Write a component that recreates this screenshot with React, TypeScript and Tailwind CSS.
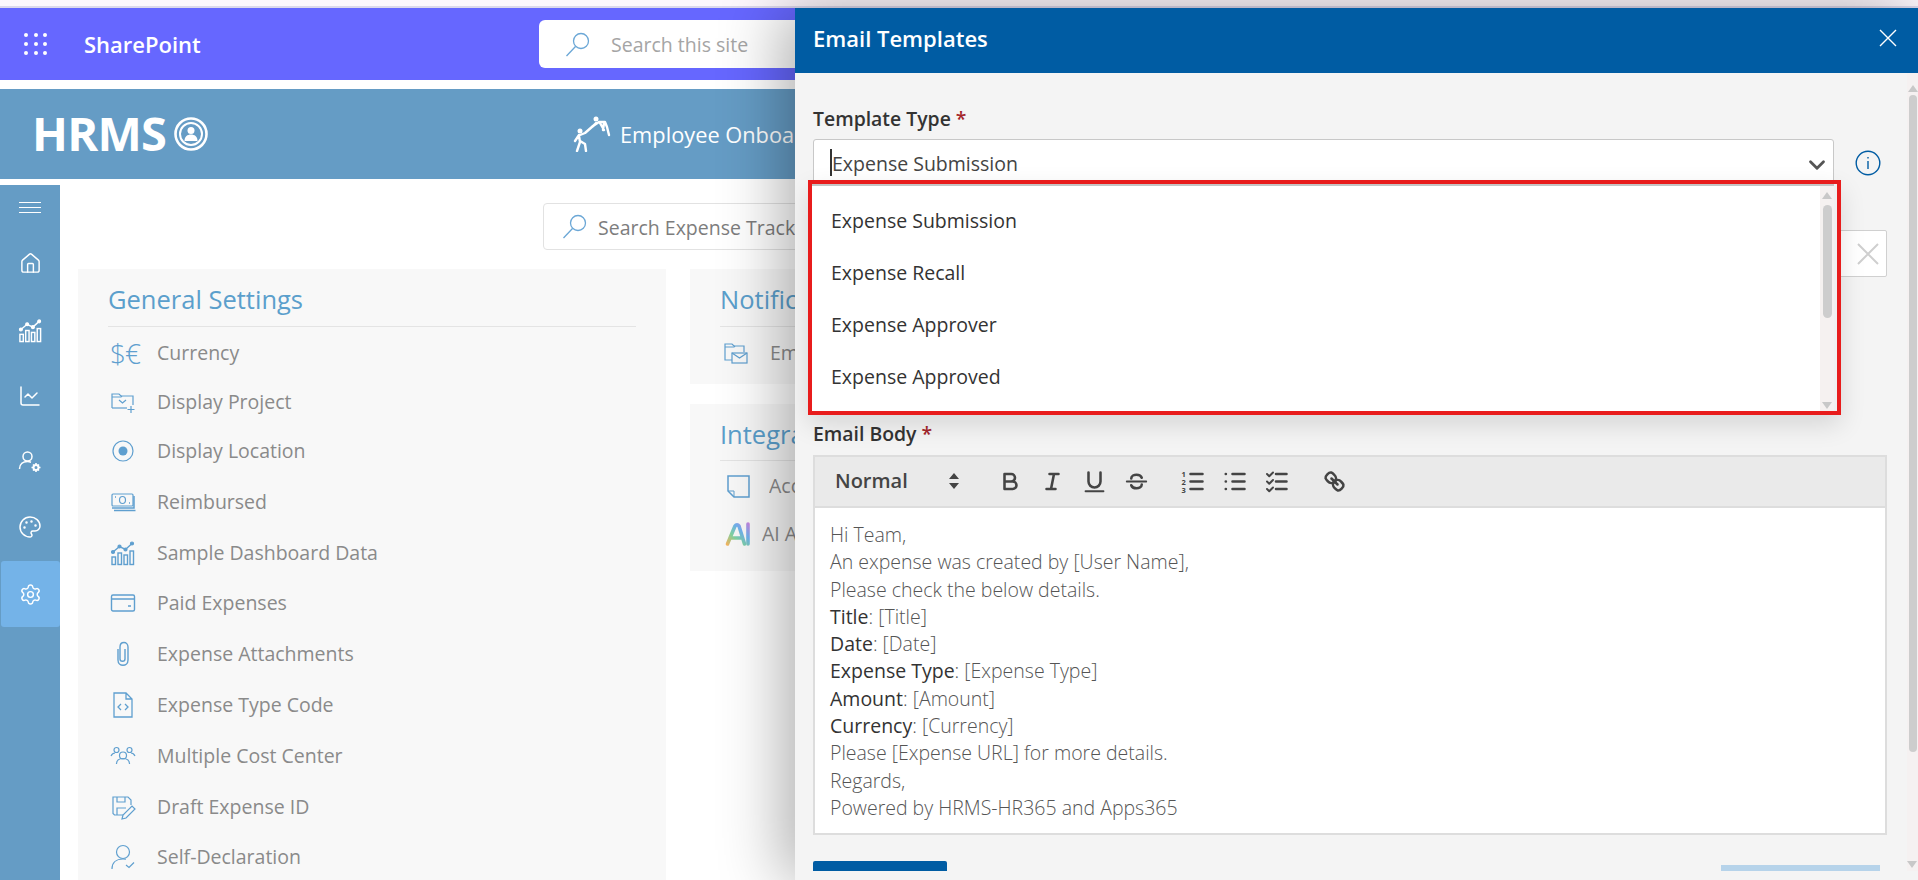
import React from "react";
import { ChevronDown, House, ChartLine, Palette, Settings } from "lucide-react";

const Svg = ({ size = 26, children, className = "" }: { size?: number; children: React.ReactNode; className?: string }) => (
  <svg width={size} height={size} viewBox="0 0 26 26" fill="none" stroke="currentColor" strokeWidth={1.2} className={className}>
    {children}
  </svg>
);

const Lens = ({ className = "" }: { className?: string }) => (
  <svg width="26" height="25" viewBox="0 0 26 25" fill="none" stroke="#6ba7d6" strokeWidth={1.3} className={className}>
    <circle cx="16" cy="9" r="7.5" />
    <path d="M10.5 14.5 1.5 24" />
  </svg>
);

const BarsIcon = ({ size = 26, sw = 1.4 }: { size?: number; sw?: number }) => (
  <Svg size={size}>
    <g strokeWidth={sw}>
      <rect x="2" y="17" width="3.500" height="7.500" />
      <rect x="8" y="13" width="3.500" height="11.500" />
      <rect x="14" y="15" width="3.500" height="9.500" />
      <rect x="20" y="11" width="3.500" height="13.500" />
      <path d="M3 12 9.500 6.500 15.500 9.500 22 3.500" />
    </g>
    <circle cx="3" cy="12" r="1.500" fill="currentColor" />
    <circle cx="9.500" cy="6.500" r="1.500" fill="currentColor" />
    <circle cx="15.500" cy="9.500" r="1.500" fill="currentColor" />
    <circle cx="22" cy="3.500" r="1.500" fill="currentColor" />
  </Svg>
);
const FolderIcon = () => (
  <Svg>
    <path d="M2 19V5h7l2 2h12v9" />
    <path d="M2 8h9l1-1" />
    <path d="M2 19h15" />
    <path d="m9 11 3.5 3 3.5-3" />
    <path d="M21 17v7M17.500 20.500h7" />
  </Svg>
);
const DotIcon = () => (
  <Svg>
    <circle cx="13" cy="13" r="10" />
    <circle cx="13" cy="13" r="4.500" fill="currentColor" stroke="none" />
  </Svg>
);
const MoneyIcon = () => (
  <Svg>
    <rect x="2" y="5" width="21" height="12" rx="1" />
    <ellipse cx="12.500" cy="11" rx="3" ry="3.500" />
    <path d="M5 8h1M19 14h1M2 19h22V7M4 21.500h21.500" strokeWidth={1.5} />
  </Svg>
);
const CardIcon = () => (
  <Svg>
    <rect x="1.500" y="5" width="23" height="16" rx="1.500" strokeWidth={1.4} />
    <path d="M1.500 9h23M18 16h3" strokeWidth={1.4} />
  </Svg>
);
const ClipIcon = () => (
  <Svg>
    <path d="M8 8v11c0 7 10 7 10 0V6c0-6-8-6-8 0v12c0 3 5 3 5 0V8" strokeWidth={1.4} />
  </Svg>
);
const FileIcon = () => (
  <Svg>
    <path d="M4 1h12l6 6v18H4zM16 1v6h6" strokeWidth={1.3} />
    <path d="m11 12-3 3 3 3M15 12l3 3-3 3" strokeWidth={1.3} />
  </Svg>
);
const PeopleIcon = () => (
  <Svg>
    <circle cx="6.500" cy="7" r="2.500" />
    <circle cx="19.500" cy="7" r="2.500" />
    <circle cx="13" cy="12.500" r="3.500" />
    <path d="M1 13c1-2 3-3 4-3M25 13c-1-2-3-3-4-3M6.500 21c0-4 3-5.500 6.500-5.500s6.500 1.500 6.500 5.500" />
  </Svg>
);
const DraftIcon = () => (
  <Svg>
    <path d="M13 21H4.500L3 19.500V3h15l3 3v5" />
    <path d="M7 3v5h8V3M7 21v-7h9" />
    <path d="m12 25 1-4 9-9 3 3-9 9z" />
  </Svg>
);
const SelfIcon = () => (
  <Svg>
    <circle cx="13" cy="8" r="6.500" />
    <path d="M2 25c0-6 4-10 11-10 1 0 2 0 3 .3" />
    <path d="m16 21 3 2.500 5-5" />
  </Svg>
);
const EmailIcon = () => (
  <Svg>
    <path d="M9 20H2V4h7l2 2h10v6" />
    <path d="M2 7h9l1-1" />
    <rect x="9" y="13" width="15" height="10" />
    <path d="m9 13 7.500 5 7.500-5" />
  </Svg>
);
const NoteIcon = () => (
  <Svg>
    <path d="M3 3h21v21H9l-6-6z" strokeWidth={1.5} />
    <path d="M3 18h6v6" strokeWidth={1} />
  </Svg>
);
const AiIcon = () => (
  <svg width="26" height="26" viewBox="0 0 26 26" fill="none" strokeWidth={3.6} strokeLinecap="round" strokeLinejoin="round">
    <defs>
      <linearGradient id="aiGrad" gradientUnits="userSpaceOnUse" x1="2" y1="24" x2="24" y2="2">
        <stop offset="0" stopColor="#f4b45f" />
        <stop offset="0.35" stopColor="#7fd3a0" />
        <stop offset="0.65" stopColor="#6fb2ef" />
        <stop offset="1" stopColor="#c884e0" />
      </linearGradient>
    </defs>
    <path d="M2.500 23 10 5c1-1.500 3-1.500 4 0l5.500 18M7 17h10" stroke="url(#aiGrad)" />
    <path d="M23 3v20" stroke="url(#aiGrad)" />
  </svg>
);
const UserGear = () => (
  <svg width="24" height="24" viewBox="0 0 24 24" fill="none" stroke="#fff" strokeWidth={1.5}>
    <circle cx="9.500" cy="6.500" r="4.500" />
    <path d="M1.500 19c0-5 3.500-7.500 8-7.500 1.500 0 2.500.3 3.500.7" />
    <circle cx="18" cy="17.500" r="2.500" strokeWidth={2} />
    <path d="M18 13v1.500M18 20.500V22M13.500 17.500H15M21 17.500h1.500M15 14.500l1 1M20 19.500l1 1M15 20.500l1-1M20 15.500l1-1" strokeWidth={1.6} />
  </svg>
);
const Hands = () => (
  <svg width="40" height="36" viewBox="0 0 40 36" fill="#fff" stroke="#fff" strokeLinecap="round" strokeLinejoin="round">
    <circle cx="8" cy="15" r="2.500" stroke="none" />
    <path d="M7 19 3 25M8 19l5-2 8-7M7 20l1 6-3 9M8 25l5 3 1 7" strokeWidth={2.4} fill="none" />
    <circle cx="24" cy="3" r="2.500" stroke="none" />
    <path d="m21 10 6-4 6 0 2 5 2 8M28 7l4 7M32 7l-1 7M21 10l3-3" strokeWidth={2.4} fill="none" />
  </svg>
);
const Logo = () => (
  <svg width="36" height="36" viewBox="0 0 36 36" fill="none" stroke="#fff">
    <circle cx="18" cy="18" r="15.500" strokeWidth={2.6} />
    <circle cx="18" cy="18" r="11" strokeWidth={2} />
    <circle cx="18" cy="14.500" r="3.500" fill="#fff" stroke="none" />
    <path d="M11.500 25c0-4.500 3-6.500 6.500-6.500s6.500 2 6.500 6.500z" fill="#fff" stroke="none" />
  </svg>
);

const Q = ({ children }: { children: React.ReactNode }) => (
  <span className="flex w-[42px] justify-center">
    <svg width="27" height="27" viewBox="0 0 18 18" fill="none" stroke="#444" strokeWidth={1.7} strokeLinecap="round" strokeLinejoin="round">
      {children}
    </svg>
  </span>
);

const settings: { icon: React.ReactNode; label: string; h: string }[] = [
  { icon: <span className="text-[28px] leading-none font-light tracking-[-1px]">$€</span>, label: "Currency", h: "h-[49px]" },
  { icon: <FolderIcon />, label: "Display Project", h: "h-[49px]" },
  { icon: <DotIcon />, label: "Display Location", h: "h-[50px]" },
  { icon: <MoneyIcon />, label: "Reimbursed", h: "h-[51px]" },
  { icon: <BarsIcon />, label: "Sample Dashboard Data", h: "h-[51px]" },
  { icon: <CardIcon />, label: "Paid Expenses", h: "h-[50px]" },
  { icon: <ClipIcon />, label: "Expense Attachments", h: "h-[51px]" },
  { icon: <FileIcon />, label: "Expense Type Code", h: "h-[51px]" },
  { icon: <PeopleIcon />, label: "Multiple Cost Center", h: "h-[51px]" },
  { icon: <DraftIcon />, label: "Draft Expense ID", h: "h-[51px]" },
  { icon: <SelfIcon />, label: "Self-Declaration", h: "h-[50px]" },
];

const body: [string, string][] = [
  ["", "Hi Team,"],
  ["", "An expense was created by [User Name],"],
  ["", "Please check the below details."],
  ["Title", " [Title]"],
  ["Date", " [Date]"],
  ["Expense Type", " [Expense Type]"],
  ["Amount", " [Amount]"],
  ["Currency", " [Currency]"],
  ["", "Please [Expense URL] for more details."],
  ["", "Regards,"],
  ["", "Powered by HRMS-HR365 and Apps365"],
];

const Arrow = ({ down = false }: { down?: boolean }) => (
  <div className={`flex h-[8px] justify-center ${down ? "rotate-180" : ""}`}>
    <div className="h-0 w-0 border-x-[5px] border-b-[7px] border-x-transparent border-b-[#c8c8c8]" />
  </div>
);

export default function App() {
  return (
    <div className="relative flex h-[880px] flex-col overflow-hidden bg-white font-['Open_Sans',sans-serif]">
      <div className="h-[8px] border-b-2 border-[#dcd8ec] bg-[#fdf7fd]" />
      <div className="flex h-[72px] items-center bg-[#6667ff] text-white">
        <div className="ml-[24px] grid w-[24px] grid-cols-3 gap-x-[5px] gap-y-[5px]">
          {Array.from({ length: 9 }).map((_, i) => (
            <span key={i} className="h-[4px] w-[4px] rounded-full bg-white" />
          ))}
        </div>
        <span className="ml-[36px] w-[117px] text-[22px] font-semibold whitespace-nowrap">SharePoint</span>
        <div className="ml-[338px] flex h-[48px] w-[400px] items-center rounded-[6px] bg-white pl-[26px]">
          <Lens />
          <span className="mt-[2px] ml-[20px] text-[19.5px] text-[#a5a5a5]">Search this site</span>
        </div>
      </div>
      <div className="mt-[9px] flex h-[90px] items-center bg-[#659cc5] text-white">
        <span className="mb-[2px] ml-[32px] w-[135px] text-[47px] leading-none font-bold tracking-[-0.8px]">HRMS</span>
        <span className="ml-[6px]"><Logo /></span>
        <span className="ml-[363px]"><Hands /></span>
        <span className="mt-[2px] ml-[8px] text-[21.8px] whitespace-nowrap">Employee Onboarding</span>
      </div>
      <div className="mt-[6px] flex min-h-0 flex-1">
        <nav className="flex w-[60px] flex-col items-center bg-[#659cc5] text-white">
          <div className="mt-[17px] flex w-[22px] flex-col gap-[4px]">
            <span className="h-px bg-white" /><span className="h-px bg-white" /><span className="h-px bg-white" />
          </div>
          <span className="mt-[39px]"><House size={23} strokeWidth={1.5} /></span>
          <span className="mt-[43px]"><BarsIcon size={25} sw={1.5} /></span>
          <span className="mt-[41px]"><ChartLine size={24} strokeWidth={1.5} /></span>
          <span className="mt-[42px]"><UserGear /></span>
          <span className="mt-[41px]"><Palette size={24} strokeWidth={1.5} /></span>
          <span className="mt-[22px] flex h-[66px] w-[59px] items-center justify-center self-end rounded-[3px] bg-[#74b3e8]"><Settings size={23} strokeWidth={1.5} /></span>
        </nav>
        <main className="min-w-0 flex-1">
          <div className="mt-[18px] ml-[483px] flex h-[47px] w-[400px] items-center rounded-[4px] border border-[#e2e2e2] pl-[18px]">
            <Lens />
            <span className="mt-[2px] ml-[10px] text-[19.5px] text-[#7d7d7d] whitespace-nowrap">Search Expense Tracker</span>
          </div>
          <div className="mt-[19px] ml-[18px] flex gap-[24px]">
            <section className="h-[620px] w-[588px] shrink-0 bg-[#f8f8f8] px-[30px]">
              <h2 className="flex h-[58px] items-center border-b border-[#e4e4e4] pt-[4px] text-[25.5px] font-normal text-[#5b9fcc]">General Settings</h2>
              <div className="pt-px">
                {settings.map((s) => (
                  <div key={s.label} className={`flex items-center ${s.h}`}>
                    <span className="flex w-[49px] shrink-0 justify-start pl-[2px] text-[#5f9fcf]">{s.icon}</span>
                    <span className="text-[19.5px] text-[#8a8a8a]">{s.label}</span>
                  </div>
                ))}
              </div>
            </section>
            <div className="flex w-[105px] shrink-0 flex-col gap-[20px] overflow-hidden">
              <section className="h-[115px] bg-[#f8f8f8] pl-[30px]">
                <h2 className="flex h-[58px] items-center overflow-hidden border-b border-[#e4e4e4] pt-[4px] text-[25.5px] font-normal whitespace-nowrap text-[#5b9fcc]">Notifications</h2>
                <div className="flex h-[52px] items-center">
                  <span className="flex w-[50px] shrink-0 pl-[3px] text-[#5f9fcf]"><EmailIcon /></span>
                  <span className="min-w-0 overflow-hidden text-[19.5px] whitespace-nowrap text-[#8a8a8a]">Email Templates</span>
                </div>
              </section>
              <section className="h-[167px] bg-[#f8f8f8] pl-[30px]">
                <h2 className="flex h-[57px] items-center overflow-hidden border-b border-[#e4e4e4] pt-[4px] text-[25.5px] font-normal whitespace-nowrap text-[#5b9fcc]">Integrations</h2>
                <div className="flex h-[50px] items-center">
                  <span className="flex w-[49px] shrink-0 pl-[5px] text-[#5f9fcf]"><NoteIcon /></span>
                  <span className="min-w-0 overflow-hidden text-[19.5px] whitespace-nowrap text-[#8a8a8a]">Accounting</span>
                </div>
                <div className="flex h-[46px] items-center">
                  <span className="flex w-[42px] shrink-0 pl-[5px]"><AiIcon /></span>
                  <span className="min-w-0 overflow-hidden text-[19.5px] whitespace-nowrap text-[#8a8a8a]">AI Assistant</span>
                </div>
              </section>
            </div>
          </div>
        </main>
      </div>

      {/* Side panel */}
      <aside className="absolute top-[8px] right-0 bottom-0 flex w-[1123px] flex-col bg-[#f4f4f4] shadow-[-12px_0_60px_rgba(0,0,0,0.32)]">
        <header className="flex h-[65px] shrink-0 items-center justify-between bg-[#005ca3] pr-[21px] pb-[5px] pl-[18px] text-white">
          <span className="text-[22px] font-semibold">Email Templates</span>
          <svg width="18" height="18" viewBox="0 0 18 18" stroke="#fff" strokeWidth={1.4}><path d="m1 1 16 16M17 1 1 17" /></svg>
        </header>
        <div className="flex h-[798px] overflow-hidden">
          <div className="relative min-w-0 flex-1 pr-[20px] pl-[18px]">
            <div className="mt-[34px] h-[24px] text-[19.4px] leading-[24px] font-semibold text-[#333]">
              Template Type <span className="text-[#a4262c]">*</span>
            </div>
            <div className="mt-[8px] flex items-start">
              <div className="relative flex h-[47px] w-[1021px] items-center rounded-[3px] border border-[#c8c8c8] bg-white pt-[3px] pl-[16px]">
                <span className="-mt-[3px] h-[27px] w-[2px] bg-[#333]" />
                <span className="text-[19.5px] text-[#444]">Expense Submission</span>
                <ChevronDown className="absolute top-[12px] right-[3px] text-[#555]" size={26} strokeWidth={2.6} />
              </div>
              <svg width="26" height="26" viewBox="0 0 26 26" fill="none" className="mt-[11px] ml-[21px]" stroke="#005ca3" strokeWidth={1.4}>
                <circle cx="13" cy="13" r="11.800" />
                <path d="M13 11v8" />
                <path d="M13 7v1.600" />
              </svg>
            </div>
            <div className="mt-[44px] flex h-[47px] w-[1074px] items-center justify-end rounded-[2px] border border-[#d0d0d0] bg-white pr-[6px]">
              <svg width="24" height="24" viewBox="0 0 24 24" stroke="#cfcfcf" strokeWidth={2}><path d="m2 2 20 20M22 2 2 22" /></svg>
            </div>
            <div className="mt-[145px] h-[24px] text-[19.4px] leading-[24px] font-semibold text-[#333]">
              Email Body <span className="text-[#a4262c]">*</span>
            </div>
            <div className="mt-[9px] w-[1074px] border-2 border-[#dddddd]">
              <div className="flex h-[51px] items-center border-b-2 border-[#dddddd] bg-[#eaeaea] pb-px pl-[20px]">
                <span className="w-[113px] text-[20px] font-semibold text-[#444]">Normal</span>
                <svg width="12" height="22" viewBox="0 0 12 22" fill="#444" className="mr-[29px]"><path d="M6 3 11 9H1zM6 19 1 13h10z" /></svg>
                <Q><path d="M5 4h4.500a2.500 2.500 0 0 1 0 5H5zM5 9h5.500a2.500 2.500 0 0 1 0 5H5z" /></Q>
                <Q><path d="M7 4h6M5 14h6M8 14l2-10" /></Q>
                <Q><path d="M5 3v6a4 4 0 0 0 8 0V3" /><path d="M3 15.500h12" strokeWidth={1.2} /></Q>
                <Q><path d="M2.500 9h13" strokeWidth={1.2} /><path d="M12.500 6.500C12 5 10.500 4.500 9 4.500S5.500 5.300 5.500 7M5.500 11.500c.5 1.500 2 2 3.500 2s3.500-.8 3.500-2.500" /></Q>
                <span className="w-[15px]" />
                <Q>
                  <path d="M7 4h8M7 9h8M7 14h8" />
                  <text x="1" y="6" fontSize="5" fill="#444" stroke="none" fontWeight="700">1</text>
                  <text x="1" y="11" fontSize="5" fill="#444" stroke="none" fontWeight="700">2</text>
                  <text x="1" y="16.500" fontSize="5" fill="#444" stroke="none" fontWeight="700">3</text>
                </Q>
                <Q><path d="M7 4h8M7 9h8M7 14h8M2.500 4h.1M2.500 9h.1M2.500 14h.1" /></Q>
                <Q><path d="M8 4h7M8 9h7M8 14h7" /><path d="m2 4 1.500 1.500L6 3M2 9l1.500 1.500L6 8M2 14l1.500 1.500L6 13" strokeWidth={1.3} /></Q>
                <span className="w-[15px]" />
                <Q>
                  <path d="M7 7l4 4" />
                  <path d="M8.900 4.577a3.476 3.476 0 0 1 .36 4.679 3.476 3.476 0 0 1-4.679-.36C3.185 7.500 2.035 6.400 4.217 4.217S7.500 3.185 8.900 4.577Z" />
                  <path d="M13.423 9.100a3.476 3.476 0 0 0-4.679-.36 3.476 3.476 0 0 0 .36 4.679c1.392 1.392 2.500 2.542 4.679.36S14.815 10.500 13.423 9.100Z" />
                </Q>
              </div>
              <div className="h-[325px] bg-white pt-[13px] pl-[15px] text-[19.5px] leading-[27.3px] font-light text-[#555]">
                {body.map(([b, t], i) => (
                  <div key={i}>
                    {b && <><span className="font-medium text-[#333]">{b}</span>:</>}
                    {t}
                  </div>
                ))}
              </div>
            </div>
            <div className="mt-[26px] flex w-[1067px] items-end justify-between">
              <div className="h-[40px] w-[134px] rounded-t-[2px] bg-[#005ca3]" />
              <div className="h-[36px] w-[159px] bg-[#b6d3ea]" />
            </div>

            {/* Open dropdown and its highlight */}
            <div className="absolute top-[107px] left-[13px] z-10 flex h-[235px] w-[1033px] border-[4px] border-[#e81c1c] bg-[#f0f0f0] shadow-[0_10px_24px_rgba(0,0,0,0.12)]">
              <div className="mr-[3px] flex min-w-0 flex-1 border-t-2 border-[#c4c4c4] bg-white">
                <div className="min-w-0 flex-1 pt-[9px] pl-[19px] text-[19.5px] text-[#333]">
                  {["Expense Submission", "Expense Recall", "Expense Approver", "Expense Approved"].map((o) => (
                    <div key={o} className="flex h-[52px] items-center">{o}</div>
                  ))}
                </div>
                <div className="flex w-[14px] flex-col justify-between bg-[#f5f1f0] pt-[6px] pb-[2px]">
                  <div>
                    <Arrow />
                    <div className="mx-auto mt-[5px] h-[113px] w-[9px] rounded-full bg-[#cdcdcd]" />
                  </div>
                  <Arrow down />
                </div>
              </div>
            </div>
          </div>
          <div className="flex w-[11px] shrink-0 flex-col justify-between bg-[#f5f1f1] pt-[12px] pb-[3px]">
            <div>
              <Arrow />
              <div className="mx-auto mt-[2px] h-[657px] w-[8px] rounded-full bg-[#cdcdcd]" />
            </div>
            <Arrow down />
          </div>
        </div>
      </aside>
    </div>
  );
}
